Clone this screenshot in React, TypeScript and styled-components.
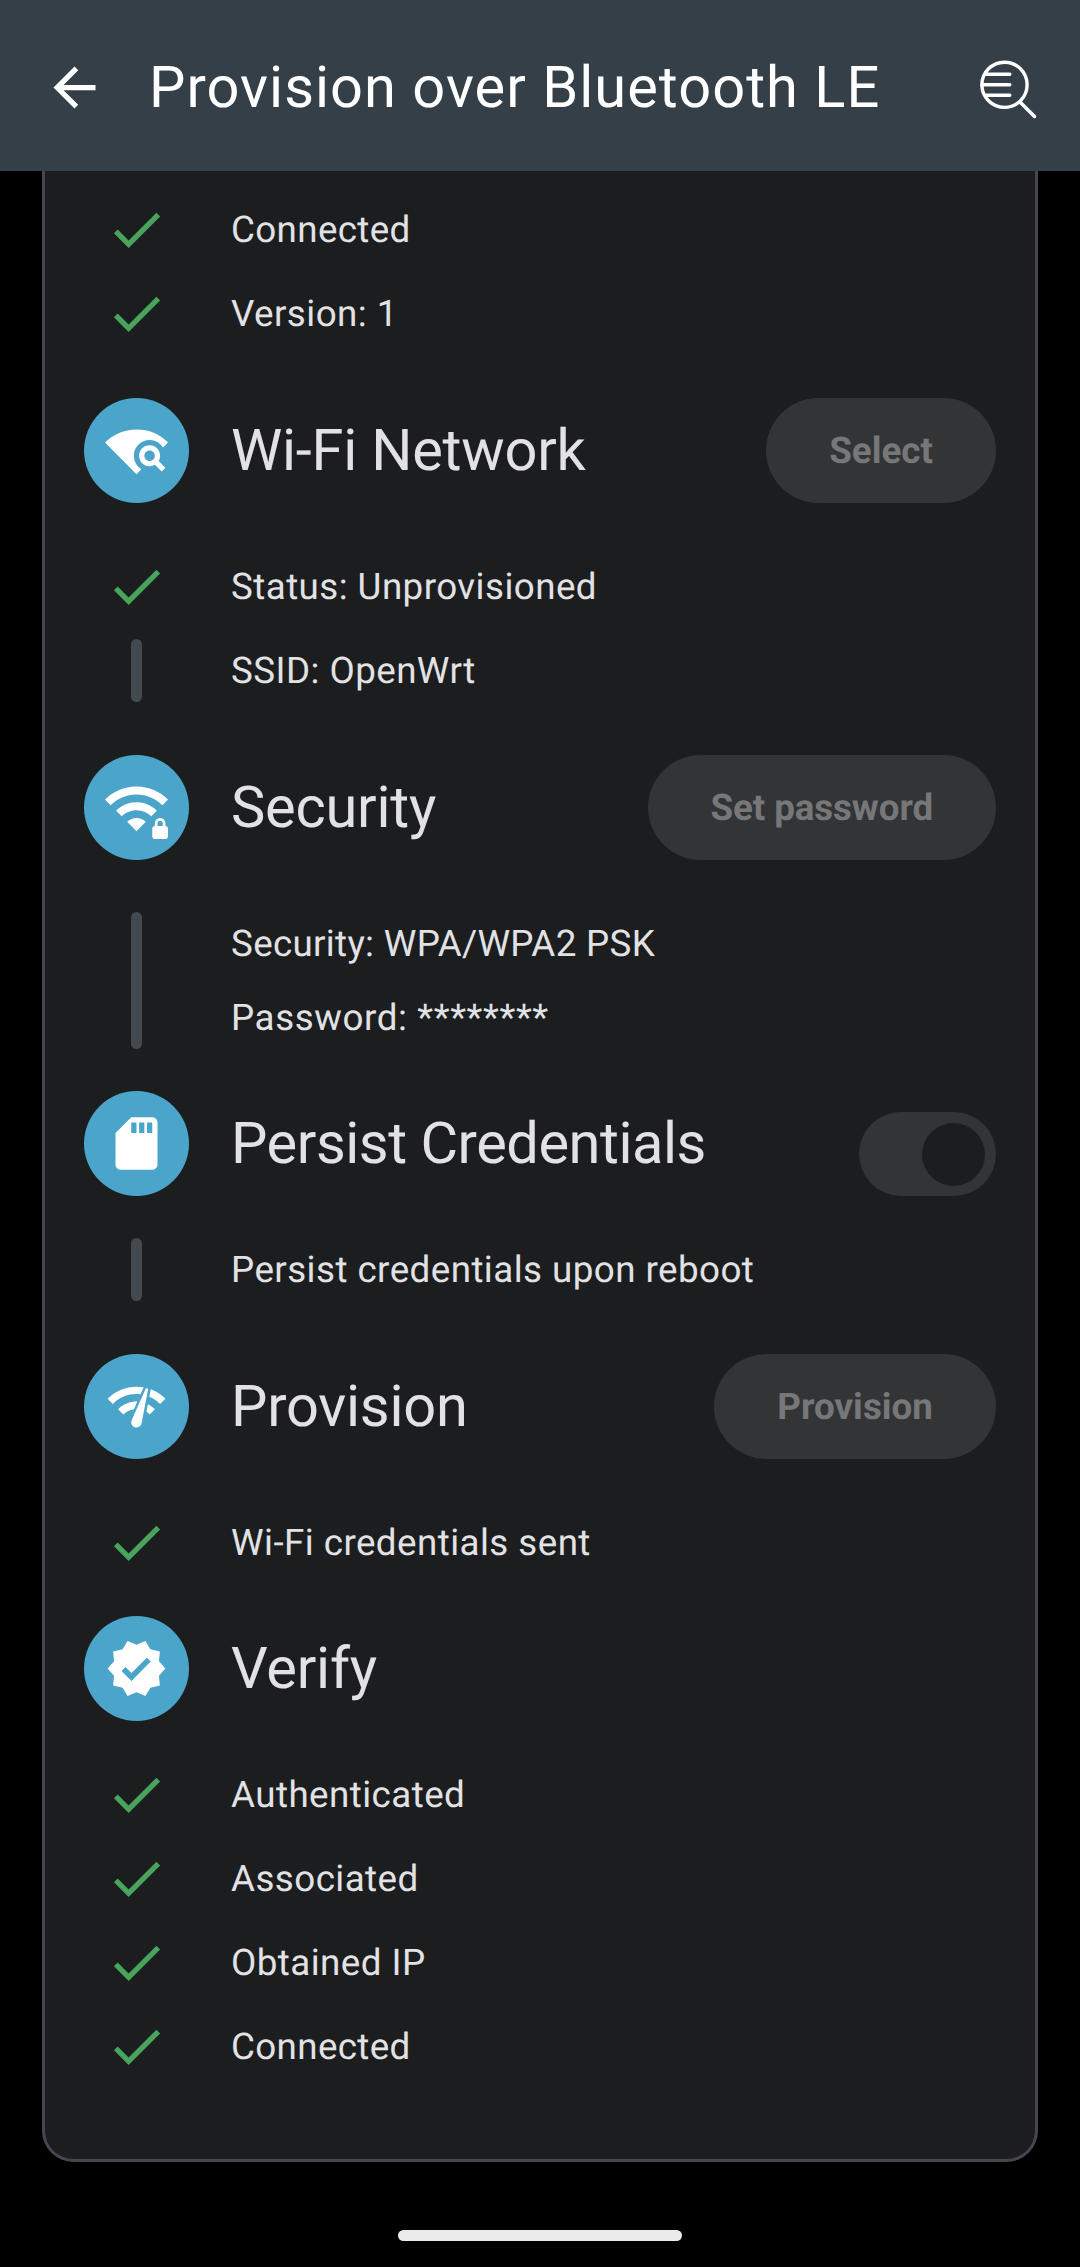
import React from "react";
import styled, { createGlobalStyle } from "styled-components";
import {
  MdArrowBack,
  MdCheck,
  MdNetworkCheck,
  MdSdStorage,
  MdVerified,
  MdWifiFind,
  MdWifiPassword,
} from "react-icons/md";

const GlobalStyle = createGlobalStyle`
  * { box-sizing: border-box; }
  body { margin: 0; background: #000; }
`;

const Screen = styled.div`
  width: 1080px;
  height: 2267px;
  display: flex;
  flex-direction: column;
  align-items: center;
  overflow: hidden;
  background: #000;
  color: #e2e2e5;
  font-family: Roboto, sans-serif;
  text-rendering: geometricPrecision;
`;

const AppBar = styled.header`
  width: 100%;
  height: 171px;
  flex: none;
  display: flex;
  align-items: center;
  padding: 4px 42px 0 43px;
  background: #353f48;
  color: #fff;
`;

const AppTitle = styled.h1`
  flex: 1;
  margin: 0 0 0 43px;
  font-size: 57.75px;
  line-height: 74px;
  font-weight: 400;
  letter-spacing: 1.04px;
  white-space: nowrap;
`;

const Card = styled.main`
  width: 996px;
  height: 1991px;
  flex: none;
  display: flex;
  flex-direction: column;
  padding: 27px 39px 0;
  background: #1c1d1f;
  border: 3px solid #49454f;
  border-top: 0;
  border-radius: 0 0 31.5px 31.5px;
`;

const Section = styled.section<{ $gap?: number }>`
  display: flex;
  flex-direction: column;
  margin-bottom: ${(p) => p.$gap ?? 53}px;
`;

const SectionHeader = styled.div`
  display: flex;
  align-items: center;
  height: 105px;
`;

const Badge = styled.div`
  width: 105px;
  height: 105px;
  flex: none;
  display: flex;
  align-items: center;
  justify-content: center;
  border-radius: 50%;
  background: #4ba5ca;
  color: #fff;
`;

const SectionTitle = styled.h2<{ $tracking?: number }>`
  flex: 1;
  margin: 0 0 0 42px;
  font-size: 57.75px;
  line-height: 74px;
  font-weight: 400;
  letter-spacing: ${(p) => p.$tracking ?? -0.22}px;
  white-space: nowrap;
`;

const PillButton = styled.button<{ $tracking?: number }>`
  height: 105px;
  padding: 0 63px;
  border: 0;
  border-radius: 52.5px;
  background: #333436;
  color: #767779;
  font: 700 36.75px/53px Roboto, sans-serif;
  letter-spacing: ${(p) => p.$tracking ?? 0.04}px;
  text-rendering: geometricPrecision;
`;

const Toggle = styled.div`
  width: 137px;
  height: 84px;
  align-self: flex-end;
  display: flex;
  align-items: center;
  justify-content: flex-end;
  padding-right: 11px;
  border-radius: 42px;
  background: #333436;
`;

const Knob = styled.div`
  width: 63px;
  height: 63px;
  border-radius: 50%;
  background: #1c1d1f;
`;

const Steps = styled.div<{ $top?: number }>`
  display: flex;
  flex-direction: column;
  gap: 21px;
  margin-top: ${(p) => p.$top ?? 52}px;
`;

const Step = styled.div`
  display: flex;
  align-items: stretch;
`;

const Rail = styled.div`
  width: 105px;
  flex: none;
  display: flex;
  justify-content: center;
  color: #48a45c;
`;

const Bar = styled.div`
  width: 11px;
  border-radius: 5.5px;
  background: #44494d;
`;

const Lines = styled.div`
  display: flex;
  flex-direction: column;
  gap: 21px;
  margin-left: 42px;
  padding: 5px 0;
  font-size: 36.75px;
  line-height: 53px;
  white-space: nowrap;
`;

const Line = styled.span<{ $tracking?: number }>`
  letter-spacing: ${(p) => p.$tracking ?? 0.44}px;
`;

const GestureBar = styled.div`
  width: 284px;
  height: 11px;
  flex: none;
  margin-top: 68px;
  border-radius: 5.5px;
  background: #ebebeb;
`;

function LogSearchIcon() {
  return (
    <svg width="63" height="63" viewBox="0 0 63 63" fill="none" stroke="#fff" strokeWidth="3.4" strokeLinecap="round">
      <circle cx="29.5" cy="28.8" r="22.6" />
      <path d="M11 18.3H34.8M7 28.8H34.8M11 39.2H34.8M45.5 46.5L59.5 60.5" />
    </svg>
  );
}

function StepRow({ done, children }: { done?: boolean; children: React.ReactNode }) {
  return (
    <Step>
      <Rail>{done ? <MdCheck size={63} /> : <Bar />}</Rail>
      <Lines>{children}</Lines>
    </Step>
  );
}

interface HeaderProps {
  icon: React.ReactNode;
  title: string;
  tracking?: number;
  children?: React.ReactNode;
}

function Header({ icon, title, tracking, children }: HeaderProps) {
  return (
    <SectionHeader>
      <Badge>{icon}</Badge>
      <SectionTitle $tracking={tracking}>{title}</SectionTitle>
      {children}
    </SectionHeader>
  );
}

export default function App() {
  return (
    <Screen>
      <GlobalStyle />
      <AppBar>
        <MdArrowBack size={63} />
        <AppTitle>Provision over Bluetooth LE</AppTitle>
        <LogSearchIcon />
      </AppBar>
      <Card>
        <Section>
          <Steps $top={0}>
            <StepRow done>
              <Line $tracking={0.36}>Connected</Line>
            </StepRow>
            <StepRow done>
              <Line>Version: 1</Line>
            </StepRow>
          </Steps>
        </Section>
        <Section>
          <Header icon={<MdWifiFind size={63} />} title="Wi-Fi Network">
            <PillButton>Select</PillButton>
          </Header>
          <Steps>
            <StepRow done>
              <Line>Status: Unprovisioned</Line>
            </StepRow>
            <StepRow>
              <Line>SSID: OpenWrt</Line>
            </StepRow>
          </Steps>
        </Section>
        <Section $gap={42}>
          <Header icon={<MdWifiPassword size={63} />} title="Security">
            <PillButton $tracking={-0.1}>Set password</PillButton>
          </Header>
          <Steps>
            <StepRow>
              <Line $tracking={0.31}>Security: WPA/WPA2 PSK</Line>
              <Line $tracking={0.6}>Password: ********</Line>
            </StepRow>
          </Steps>
        </Section>
        <Section>
          <Header icon={<MdSdStorage size={63} />} title="Persist Credentials" tracking={-0.46}>
            <Toggle>
              <Knob />
            </Toggle>
          </Header>
          <Steps $top={42}>
            <StepRow>
              <Line>Persist credentials upon reboot</Line>
            </StepRow>
          </Steps>
        </Section>
        <Section $gap={42}>
          <Header icon={<MdNetworkCheck size={63} />} title="Provision">
            <PillButton>Provision</PillButton>
          </Header>
          <Steps>
            <StepRow done>
              <Line>Wi-Fi credentials sent</Line>
            </StepRow>
          </Steps>
        </Section>
        <Section>
          <Header icon={<MdVerified size={63} />} title="Verify" />
          <Steps $top={42}>
            <StepRow done>
              <Line>Authenticated</Line>
            </StepRow>
            <StepRow done>
              <Line>Associated</Line>
            </StepRow>
            <StepRow done>
              <Line>Obtained IP</Line>
            </StepRow>
            <StepRow done>
              <Line $tracking={0.36}>Connected</Line>
            </StepRow>
          </Steps>
        </Section>
      </Card>
      <GestureBar />
    </Screen>
  );
}
